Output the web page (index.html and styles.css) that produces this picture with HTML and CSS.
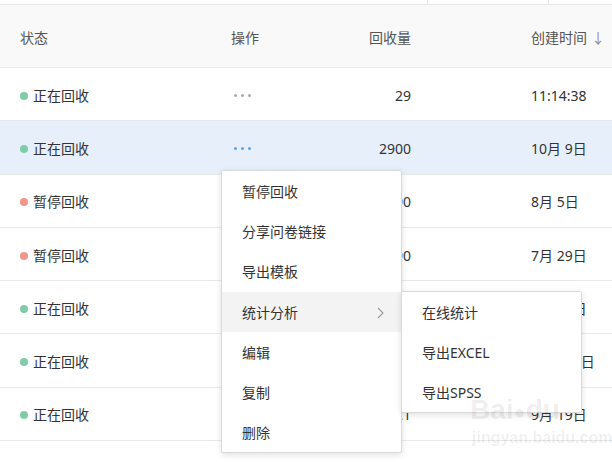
FILE: index.html
```html
<!DOCTYPE html>
<html lang="zh-CN">
<head>
    <meta charset="UTF-8">
    <title>问卷列表</title>
    <link rel="stylesheet" href="styles.css">
</head>
<body>
    <div class="page">
        <div class="topStrip">
            <div class="stripCell first"></div>
            <div class="stripCell second"></div>
            <div class="stripCell"></div>
        </div>

        <div class="list">
            <div class="row head">
                <div class="cell">状态</div>
                <div class="cell">操作</div>
                <div class="cell num">回收量</div>
                <div class="cell date">创建时间 <span class="arrow">↓</span></div>
            </div>

            <div class="row">
                <div class="cell"><i class="dot on"></i>正在回收</div>
                <div class="cell"><span class="more"><b></b><b></b><b></b></span></div>
                <div class="cell num">29</div>
                <div class="cell date">11:14:38</div>
            </div>
            <div class="row active">
                <div class="cell"><i class="dot on"></i>正在回收</div>
                <div class="cell"><span class="more"><b></b><b></b><b></b></span></div>
                <div class="cell num">2900</div>
                <div class="cell date">10月 9日</div>
            </div>
            <div class="row">
                <div class="cell"><i class="dot off"></i>暂停回收</div>
                <div class="cell"><span class="more"><b></b><b></b><b></b></span></div>
                <div class="cell num">290</div>
                <div class="cell date">8月 5日</div>
            </div>
            <div class="row">
                <div class="cell"><i class="dot off"></i>暂停回收</div>
                <div class="cell"><span class="more"><b></b><b></b><b></b></span></div>
                <div class="cell num">290</div>
                <div class="cell date">7月 29日</div>
            </div>
            <div class="row">
                <div class="cell"><i class="dot on"></i>正在回收</div>
                <div class="cell"><span class="more"><b></b><b></b><b></b></span></div>
                <div class="cell num">120</div>
                <div class="cell date">7月 19日</div>
            </div>
            <div class="row">
                <div class="cell"><i class="dot on"></i>正在回收</div>
                <div class="cell"><span class="more"><b></b><b></b><b></b></span></div>
                <div class="cell num">35</div>
                <div class="cell date">10月 19日</div>
            </div>
            <div class="row">
                <div class="cell"><i class="dot on"></i>正在回收</div>
                <div class="cell"><span class="more"><b></b><b></b><b></b></span></div>
                <div class="cell num">21</div>
                <div class="cell date">9月 19日</div>
            </div>
            <div class="row"></div>
        </div>

        <ul class="menu">
            <li>暂停回收</li>
            <li>分享问卷链接</li>
            <li>导出模板</li>
            <li class="hover">
                统计分析
                <svg class="chevron" width="7" height="12" viewBox="0 0 7 12">
                    <polyline points="1,1 6,6 1,11" fill="none" stroke="#999" stroke-width="1.1"/>
                </svg>
                <ul class="menu sub">
                    <li>在线统计</li>
                    <li>导出EXCEL</li>
                    <li>导出SPSS</li>
                </ul>
            </li>
            <li>编辑</li>
            <li>复制</li>
            <li>删除</li>
        </ul>

        <div class="watermark">
            <div class="wmLogo">Bai<span class="paw">●</span>du</div>
            <div class="wmUrl">jingyan.baidu.com</div>
        </div>
    </div>
</body>
</html>
```

FILE: styles.css
```css
* {
    margin: 0;
    padding: 0;
    box-sizing: border-box;
}
body {
    background: #fff;
    color: #333;
    font-family: "Noto Sans", "Noto Sans CJK SC", sans-serif;
    font-size: 14px;
}
.page {
    position: relative;
    width: 612px;
    height: 462px;
    overflow: hidden;
}
.topStrip {
    display: flex;
    height: 4px;
}
.stripCell {
    flex: 1;
}
.stripCell.first {
    flex: 0 0 428px;
    border-right: 1px solid #e6e6e6;
}
.stripCell.second {
    flex: 0 0 121px;
    border-right: 1px solid #e6e6e6;
}

.list {
    border-top: 1px solid #e6e6e6;
}
.row {
    display: grid;
    grid-template-columns: 211px 120px 80px 1fr;
    align-items: center;
    height: 53.3px;
    border-bottom: 1px solid #e8e8e8;
}
.row.head {
    height: 63px;
    background: #f9f9f9;
    color: #555;
}
.row.active {
    background: #e7f0fa;
}
.cell {
    display: flex;
    align-items: center;
    line-height: 20px;
    padding-top: 3px;
    white-space: nowrap;
}
.cell:first-child {
    padding-left: 20px;
}
.cell:nth-child(2) {
    padding-left: 20px;
}
.cell.num {
    justify-content: flex-end;
}
.cell.date {
    padding-left: 120px;
}
.arrow {
    color: #9a88a6;
    margin-left: 4px;
}
.dot {
    width: 8px;
    height: 8px;
    border-radius: 50%;
    margin-right: 5px;
}
.dot.on { background: #80cca8; }
.dot.off { background: #f2958b; }

.more {
    display: flex;
    gap: 4px;
    padding-left: 3px;
}
.more b {
    width: 3px;
    height: 3px;
    border-radius: 50%;
    background: #aaa;
}
.row.active .more b {
    background: #5aa4e6;
}

.menu {
    position: absolute;
    left: 221px;
    top: 170px;
    width: 181px;
    list-style: none;
    background: #fff;
    border: 1px solid #dadada;
    border-radius: 2px;
    box-shadow: 0 2px 6px rgba(0, 0, 0, 0.12);
    z-index: 2;
}
.menu li {
    position: relative;
    display: flex;
    align-items: center;
    height: 40.2px;
    padding-left: 20px;
    color: #333;
    white-space: nowrap;
}
.menu li.hover {
    background: #f3f3f3;
}
.chevron {
    position: absolute;
    right: 17px;
    top: 15px;
}
.menu.sub {
    left: 179px;
    top: -1px;
    width: 181px;
}
.menu.sub li {
    background: #fff;
}

.watermark {
    position: absolute;
    left: 470px;
    top: 394px;
    color: rgba(0, 0, 0, 0.07);
    font-family: "Liberation Sans", sans-serif;
    font-weight: bold;
    white-space: nowrap;
    pointer-events: none;
    z-index: 5;
}
.wmLogo {
    font-size: 28px;
    line-height: 32px;
}
.paw {
    font-size: 20px;
}
.wmUrl {
    font-size: 16px;
    line-height: 20px;
    padding-left: 2px;
}
```
